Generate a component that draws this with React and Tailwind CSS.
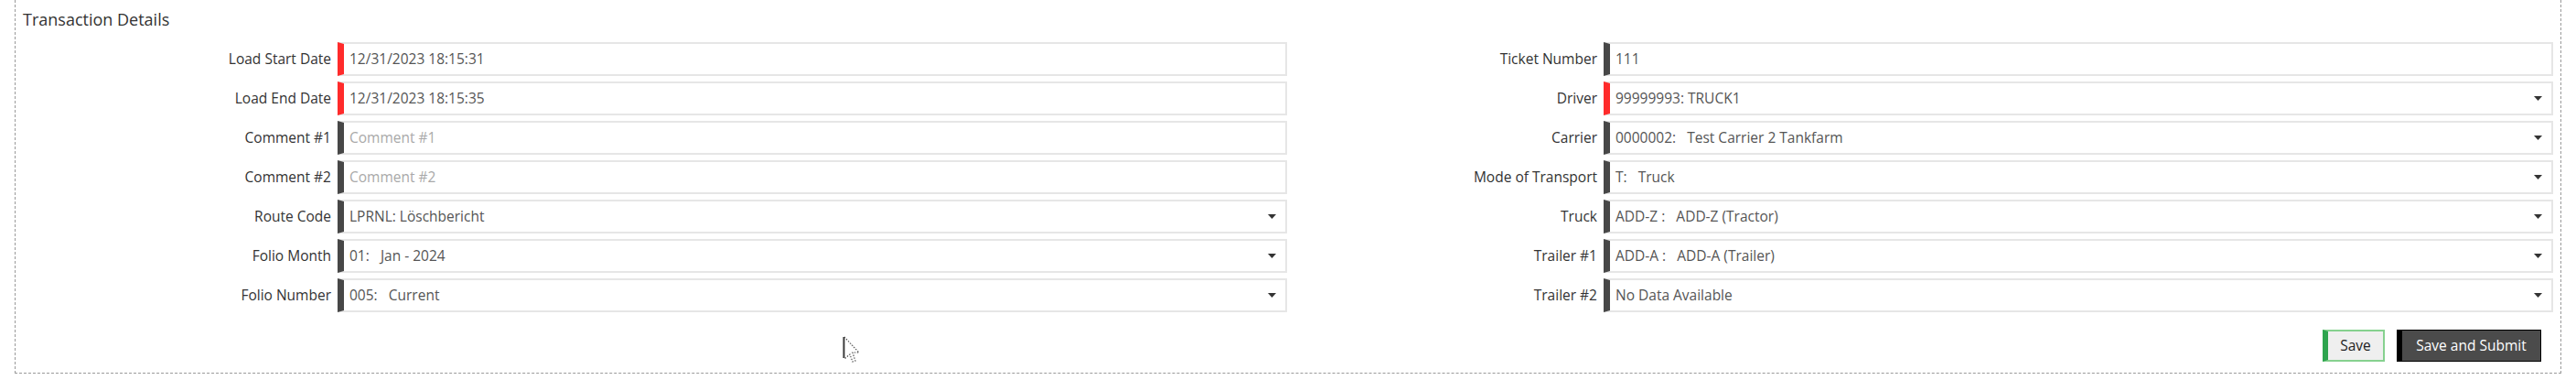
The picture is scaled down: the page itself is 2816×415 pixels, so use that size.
import React from 'react';

const leftRows = [
  { label: 'Load Start Date', value: '12/31/2023 18:15:31', required: true },
  { label: 'Load End Date', value: '12/31/2023 18:15:35', required: true },
  { label: 'Comment #1', placeholder: 'Comment #1' },
  { label: 'Comment #2', placeholder: 'Comment #2' },
  { label: 'Route Code', value: 'LPRNL: Löschbericht', select: true },
  { label: 'Folio Month', value: '01:   Jan - 2024', select: true },
  { label: 'Folio Number', value: '005:   Current', select: true },
];

const rightRows = [
  { label: 'Ticket Number', value: '111' },
  { label: 'Driver', value: '99999993: TRUCK1', required: true, select: true },
  { label: 'Carrier', value: '0000002:   Test Carrier 2 Tankfarm', select: true },
  { label: 'Mode of Transport', value: 'T:   Truck', select: true },
  { label: 'Truck', value: 'ADD-Z :   ADD-Z (Tractor)', select: true },
  { label: 'Trailer #1', value: 'ADD-A :   ADD-A (Trailer)', select: true },
  { label: 'Trailer #2', value: 'No Data Available', select: true },
];

const Caret = () => (
  <svg width="9" height="5" viewBox="0 0 9 5" className="shrink-0">
    <polygon points="0,0 9,0 4.5,5" fill="#333" />
  </svg>
);

const Field = ({ row }) => (
  <div
    className={
      'flex h-[37px] w-[1038px] items-center justify-between border-2 border-l-[7px] border-[#e6e6e6] bg-white pl-[6px] pr-[10px] ' +
      (row.required ? 'border-l-[#ff2b2b]' : 'border-l-[#474747]')
    }
  >
    {row.value ? (
      <span className="whitespace-pre text-[#555]">{row.value}</span>
    ) : (
      <span className="whitespace-pre text-[#a9a9a9]">{row.placeholder}</span>
    )}
    {row.select && <Caret />}
  </div>
);

const Column = ({ rows, width }) => (
  <div className="flex flex-col gap-[6px]" style={{ width }}>
    {rows.map(row => (
      <div key={row.label} className="flex items-center justify-end">
        <span className="pr-[7px] text-[#333]">{row.label}</span>
        <Field row={row} />
      </div>
    ))}
  </div>
);

const Cursor = () => (
  <svg width="24" height="32" viewBox="0 0 24 32" className="absolute left-[921px] top-[367px]">
    <line x1="1.5" y1="1" x2="1.5" y2="24" stroke="#3a3a3a" strokeWidth="2" />
    <polyline points="2,1 18,18 11,18 14,27 11,28 8,20 2,25" fill="none" stroke="#555" strokeWidth="1.2" strokeDasharray="1.5 1.5" />
  </svg>
);

export default function App() {
  return (
    <div className="relative h-[415px] w-[2816px] bg-white px-4 font-['Open_Sans',sans-serif] text-[15.5px]">
      <div className="border border-t-0 border-dashed border-[#9a9a9a] pb-3 pr-2">
        <div className="pl-2 pt-[9px] text-[18px] leading-6 text-[#333]">Transaction Details</div>
        <div className="mt-[13px] flex">
          <Column rows={leftRows} width={1390} />
          <Column rows={rightRows} width={1384} />
        </div>
        <div className="mt-[19px] flex justify-end gap-[13px] pr-[13px]">
          <button className="h-[35px] w-[68px] border-2 border-l-[6px] border-[#86d18f] border-l-[#2da44e] bg-[#efefef] text-[#222]">
            Save
          </button>
          <button className="h-[35px] w-[158px] border border-l-[6px] border-black bg-[#4b4b4b] text-white">
            Save and Submit
          </button>
        </div>
      </div>
      <Cursor />
    </div>
  );
}
